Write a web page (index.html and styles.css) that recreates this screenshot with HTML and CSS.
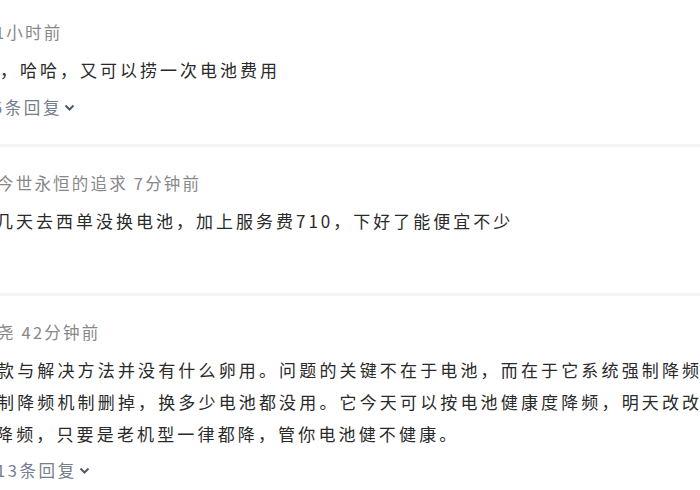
FILE: index.html
```html
<!DOCTYPE html>
<html lang="zh">
<head>
<meta charset="utf-8">
<link rel="stylesheet" href="styles.css">
</head>
<body>
<div class="list">
  <div class="comment c1">
    <div class="meta shift-1">1小时前</div>
    <div class="text">，哈哈，又可以捞一次电池费用</div>
    <div class="reply shift-5">5条回复<svg class="chev" viewBox="0 0 10 7" width="11" height="7"><path d="M1 1.5 L5 5.5 L9 1.5" fill="none" stroke="#4f5b6b" stroke-width="2"/></svg></div>
  </div>
  <div class="sep"></div>
  <div class="comment c2">
    <div class="meta shift-jin">今世永恒的追求 7分钟前</div>
    <div class="text shift-ji">几天去西单没换电池，加上服务费710，下好了能便宜不少</div>
  </div>
  <div class="sep"></div>
  <div class="comment c3">
    <div class="meta shift-yao">尧 42分钟前</div>
    <div class="text">
      <div class="line shift-kuan">款与解决方法并没有什么卵用。问题的关键不在于电池，而在于它系统强制降频</div>
      <div class="line shift-zhi">制降频机制删掉，换多少电池都没用。它今天可以按电池健康度降频，明天改改</div>
      <div class="line shift-jiang">降频，只要是老机型一律都降，管你电池健不健康。</div>
    </div>
    <div class="reply shift-13">13条回复<svg class="chev" viewBox="0 0 10 7" width="11" height="7"><path d="M1 1.5 L5 5.5 L9 1.5" fill="none" stroke="#4f5b6b" stroke-width="2"/></svg></div>
  </div>
</div>
</body>
</html>
```
FILE: styles.css
```css
html, body {
  margin: 0;
  padding: 0;
  background: #ffffff;
  overflow: hidden;
  width: 700px;
  height: 490px;
}
body {
  font-family: "Noto Sans CJK SC", "Noto Sans", sans-serif;
}
.list {
  display: flex;
  flex-direction: column;
  white-space: nowrap;
}
.comment {
  display: flex;
  flex-direction: column;
}
.c1 { padding-top: 17px; padding-bottom: 22px; }
.c2 { padding-top: 21px; padding-bottom: 56px; }
.c3 { padding-top: 21px; }
.sep {
  height: 3px;
  background: #f4f4f4;
}
.meta {
  font-size: 16.5px;
  line-height: 30px;
  color: #888888;
  letter-spacing: 2.2px;
}
.text {
  margin-top: 7px;
  font-size: 17px;
  line-height: 32px;
  color: #2a2a2a;
  letter-spacing: 3px;
}
.c3 .text { letter-spacing: 3.15px; }
.reply {
  margin-top: 6px;
  font-size: 16.5px;
  line-height: 30px;
  color: #747d8c;
  letter-spacing: 2.6px;
  display: flex;
  align-items: center;
}
.c3 .reply { margin-top: 5px; }
.chev { margin-left: 2px; }
.shift-1 { margin-left: -5px; }
.shift-5 { margin-left: -7px; }
.shift-jin { margin-left: -3px; }
.shift-ji { margin-left: -4px; }
.shift-yao { margin-left: -3px; }
.shift-kuan { margin-left: -3px; }
.shift-zhi { margin-left: -3px; }
.shift-jiang { margin-left: -4px; }
.shift-13 { margin-left: -4px; }
```
